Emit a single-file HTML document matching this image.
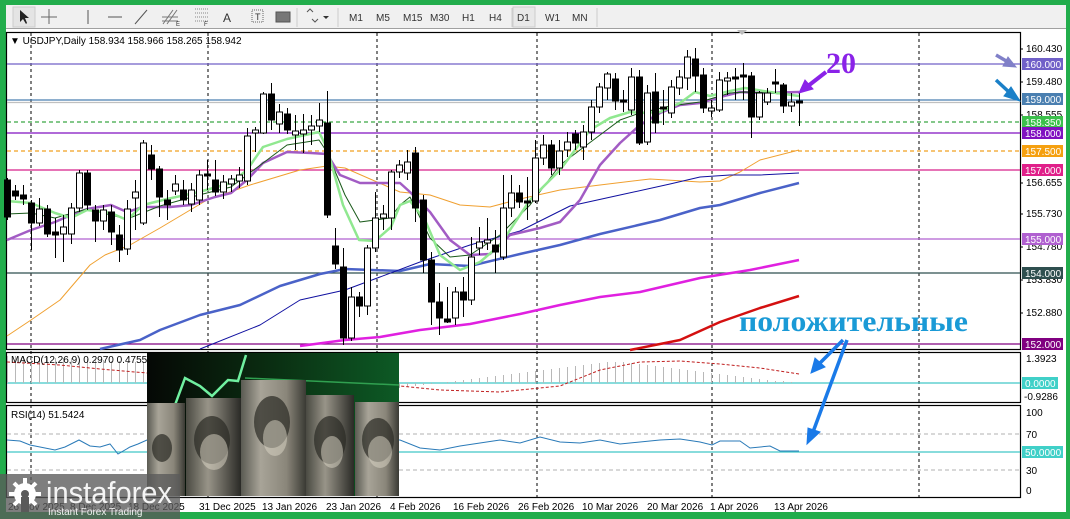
<!DOCTYPE html>
<html><head><meta charset="utf-8"><style>
html,body{margin:0;padding:0;width:1070px;height:519px;overflow:hidden;background:#fff;font-family:"Liberation Sans",sans-serif}
svg text{font-family:"Liberation Sans",sans-serif}
</style></head><body>
<svg id="s" width="1070" height="519" viewBox="0 0 1070 519" xmlns="http://www.w3.org/2000/svg">
<rect width="1070" height="519" fill="#fff"/>
<rect x="0" y="0" width="1070" height="5" fill="#22ad4c"/>
<rect x="0" y="0" width="6" height="519" fill="#22ad4c"/>
<rect x="1066" y="0" width="4" height="519" fill="#22ad4c"/>
<rect x="0" y="512" width="1070" height="7" fill="#22ad4c"/>
<rect x="6" y="5" width="1060" height="24" fill="#f0f0f0"/>
<rect x="6" y="28" width="1060" height="1" fill="#a0a0a0"/>
<g fill="none" stroke="#555" stroke-width="1">
<rect x="13" y="7" width="22" height="20" fill="#e4e4e4" stroke="#ccc"/>
<path d="M20 10 L20 22 L23 19 L26 24 L27 23 L25 18 L29 18 Z" fill="#222" stroke="none"/>
<path d="M49 9 V24 M41 17 H57" stroke="#666"/>
<path d="M88 10 V24"/><path d="M108 17 H122"/><path d="M135 24 L147 10"/>
<path d="M163 24 L173 10 M167 24 L177 10 M162 17 H178 M162 21 H178" stroke="#777"/>
<path d="M195 9 H208 M195 13 H208 M195 17 H208 M195 21 H208" stroke="#888" stroke-dasharray="1 1"/>
<rect x="252" y="10" width="11" height="12" stroke="#666" stroke-dasharray="1 1"/>
<rect x="276" y="12" width="14" height="10" fill="#777" stroke="#555"/>
<path d="M297 8 V27 M338 8 V27 M512 8 V27 M597 8 V27" stroke="#ccc"/>
</g>
<text x="223" y="22" font-size="12" fill="#333">A</text>
<text x="255" y="20" font-size="9" fill="#333">T</text>
<text x="204" y="26" font-size="6" fill="#333">F</text>
<text x="176" y="26" font-size="6" fill="#333">E</text>
<path d="M307 12 l3 -3 l3 3 M312 19 l3 3 l3 -3" stroke="#555" fill="none"/>
<path d="M323 16 l3 3 l3 -3z" fill="#333"/>
<g font-size="10" fill="#333">
<text x="349" y="21">M1</text><text x="376" y="21">M5</text><text x="403" y="21">M15</text><text x="430" y="21">M30</text><text x="462" y="21">H1</text><text x="489" y="21">H4</text>
<rect x="513" y="7" width="22" height="20" fill="#e8e8e8" stroke="#ccc"/>
<text x="517" y="21">D1</text><text x="545" y="21">W1</text><text x="572" y="21">MN</text>
</g>
<g fill="none" stroke="#000" stroke-width="1.2">
<rect x="6.5" y="32.5" width="1014" height="317"/>
<rect x="6.5" y="352.5" width="1014" height="50"/>
<rect x="6.5" y="405.5" width="1014" height="92"/>
</g>
<g stroke="#000" stroke-dasharray="3 3" stroke-width="1">
<path d="M31 33 V497 M208 33 V497 M377 33 V497 M537 33 V497 M712 33 V497 M919 33 V497"/>
</g>
<g stroke-width="1.2">
<path d="M7 64 H1020" stroke="#7060c8"/>
<path d="M7 100 H1020" stroke="#4a7fb0"/>
<path d="M7 102.5 H1020" stroke="#c0c0c0"/>
<path d="M7 122 H1020" stroke="#3aa845" stroke-dasharray="4 3"/>
<path d="M7 133 H1020" stroke="#8010c0"/>
<path d="M7 151 H1020" stroke="#f0a020" stroke-dasharray="4 3"/>
<path d="M7 170 H1020" stroke="#d8208a"/>
<path d="M7 239 H1020" stroke="#b060d0"/>
<path d="M7 273 H1020" stroke="#2f4f4f"/>
<path d="M7 344 H1020" stroke="#800080"/>
</g>
<g fill="none" stroke-linejoin="round">
<polyline stroke="#f0a030" stroke-width="1" points="7,336 31,320 60,300 90,265 105,255 130,245 160,228 207,200 250,185 300,170 327,166 345,168 400,192 430,195 460,205 490,207 520,199 560,190 600,185 650,179 700,182 720,181 740,172 760,160 799,150"/>
<polyline stroke="#4a62c8" stroke-width="2.5" points="100,349 140,340 160,330 200,315 240,305 280,286 320,274 345,269 400,271 430,264 470,266 520,254 560,245 600,234 660,220 700,208 720,205 760,193 799,183"/>
<polyline stroke="#1010a0" stroke-width="1" points="200,349 260,325 300,300 345,290 380,277 420,262 470,245 520,231 570,206 620,195 670,184 700,177 730,175 760,175 799,173"/>
<polyline stroke="#e020e0" stroke-width="2.5" points="300,346 345,340 380,337 420,330 470,324 520,314 560,305 600,297 640,292 700,278 750,270 799,260"/>
<polyline stroke="#d41010" stroke-width="2.5" points="630,350 680,340 720,322 760,308 799,296"/>
<polyline stroke="#a25cc4" stroke-width="2.5" points="7,240 31,230 55,222 71,215 87,209 111,205 127,212 143,207 170,207 191,205 215,197 231,193 247,180 263,163 287,152 311,153 327,154 340,175 360,183 400,183 410,192 430,212 450,240 470,255 490,254 510,235 540,228 560,222 580,200 600,165 620,143 640,125 660,113 680,105 700,103 720,97 740,92 760,93 799,92"/>
<polyline stroke="#1a5a1a" stroke-width="1" points="7,214 31,213 55,218 87,209 127,219 160,206 199,195 231,187 263,163 287,145 319,140 327,152 345,195 360,222 390,218 400,205 410,197 430,238 450,257 470,255 500,235 530,205 560,165 600,135 620,120 640,113 670,106 700,102 730,93 745,92 770,93 799,96"/>
<polyline stroke="#90e890" stroke-width="2.5" points="7,201 31,203 55,213 71,218 87,210 111,213 127,220 143,205 167,199 199,192 231,183 247,170 263,147 287,139 319,132 327,148 343,205 359,240 375,241 391,227 400,205 410,201 425,220 440,255 460,270 480,262 500,245 530,200 560,170 590,130 610,118 630,112 640,113 660,112 680,103 695,92 710,96 730,91 745,88 770,92 799,96"/>
</g>
<g id="candles" stroke="#000" stroke-width="1"></g>
<path d="M7 383 H1020" stroke="#40c8c8" stroke-width="1.2"/>
<g id="macd" stroke="#b8b8b8" stroke-width="1"></g>
<polyline fill="none" stroke="#c02020" stroke-dasharray="3 2" points="7,362 60,365 100,369 147,373 400,386 440,390 500,392 560,386 600,370 640,362 680,361 720,364 760,368 799,374"/>
<text x="11" y="363" font-size="10" fill="#000">MACD(12,26,9) 0.2970 0.4755</text>
<path d="M7 434 H1020 M7 470 H1020" stroke="#b0b0b0" stroke-dasharray="4 3"/>
<path d="M7 452 H1020" stroke="#40c8c8" stroke-width="1.2"/>
<polyline fill="none" stroke="#2a7ab8" stroke-width="1" points="7,440 20,441 30,445 40,447 55,450 65,447 79,440 90,446 100,447 110,444 118,454 130,447 138,444 147,440 400,440 420,448 440,450 460,446 480,443 500,440 520,443 540,437 560,442 580,443 600,440 620,444 640,442 660,440 680,439 700,442 712,445 720,441 740,441 750,448 770,446 780,451 799,451"/>
<text x="11" y="418" font-size="10" fill="#000">RSI(14) 51.5424</text>
<g font-size="10" fill="#000">
<text x="1026" y="52">160.430</text><text x="1026" y="85">159.480</text><text x="1026" y="118">158.555</text>
<text x="1026" y="186">156.655</text><text x="1026" y="217">155.730</text><text x="1026" y="250">154.780</text>
<text x="1026" y="283">153.830</text><text x="1026" y="316">152.880</text>
<text x="1026" y="362">1.3923</text><text x="1024" y="400">-0.9286</text>
<text x="1026" y="416">100</text><text x="1026" y="438">70</text><text x="1026" y="474">30</text><text x="1026" y="494">0</text>
</g>
<g stroke="#000"><path d="M1020 49 h3 M1020 82 h3 M1020 115 h3 M1020 183 h3 M1020 214 h3 M1020 247 h3 M1020 280 h3 M1020 313 h3"/></g>
<g font-size="10" fill="#fff">
<rect x="1022" y="58" width="41" height="12" fill="#7060c8"/><text x="1025" y="68">160.000</text>
<rect x="1022" y="93" width="41" height="12" fill="#4a7fb0"/><text x="1025" y="103">159.000</text>
<rect x="1022" y="116" width="41" height="12" fill="#3cc04c"/><text x="1025" y="126">158.350</text>
<rect x="1022" y="127" width="41" height="12" fill="#8010c0"/><text x="1025" y="137">158.000</text>
<rect x="1022" y="145" width="41" height="12" fill="#f5a010"/><text x="1025" y="155">157.500</text>
<rect x="1022" y="164" width="41" height="12" fill="#e0208a"/><text x="1025" y="174">157.000</text>
<rect x="1022" y="233" width="41" height="12" fill="#b060d0"/><text x="1025" y="243">155.000</text>
<rect x="1022" y="267" width="41" height="12" fill="#2f4f4f"/><text x="1025" y="277">154.000</text>
<rect x="1022" y="338" width="41" height="12" fill="#800080"/><text x="1025" y="348">152.000</text>
<rect x="1022" y="377" width="36" height="12" fill="#40d0c8"/><text x="1025" y="387">0.0000</text>
<rect x="1022" y="446" width="41" height="12" fill="#40d0c8"/><text x="1025" y="456">50.0000</text>
</g>
<g font-size="10" fill="#000">
<text x="8" y="510">26 Nov 2025</text><text x="70" y="510">8 Dec 2025</text><text x="128" y="510">18 Dec 2025</text>
<text x="199" y="510">31 Dec 2025</text><text x="262" y="510">13 Jan 2026</text><text x="326" y="510">23 Jan 2026</text>
<text x="390" y="510">4 Feb 2026</text><text x="453" y="510">16 Feb 2026</text><text x="518" y="510">26 Feb 2026</text>
<text x="582" y="510">10 Mar 2026</text><text x="647" y="510">20 Mar 2026</text><text x="710" y="510">1 Apr 2026</text><text x="774" y="510">13 Apr 2026</text>
</g>
<text x="10" y="44" font-size="10" fill="#000">▼ USDJPY,Daily  158.934 158.966 158.265 158.942</text>
<defs>
<linearGradient id="bg" x1="0" x2="1"><stop offset="0" stop-color="#050805"/><stop offset="0.45" stop-color="#0a2a10"/><stop offset="1" stop-color="#0d5a25"/></linearGradient>
<linearGradient id="roll" x1="0" x2="1"><stop offset="0" stop-color="#5a5a52"/><stop offset="0.3" stop-color="#a8a498"/><stop offset="0.7" stop-color="#8a867a"/><stop offset="1" stop-color="#3a3a34"/></linearGradient>
<linearGradient id="roll2" x1="0" x2="1"><stop offset="0" stop-color="#4a4a42"/><stop offset="0.4" stop-color="#989488"/><stop offset="1" stop-color="#2a2a26"/></linearGradient>
</defs>
<rect x="147" y="353" width="252" height="143" fill="url(#bg)"/>
<polyline points="175,405 185,378 200,386 212,396 228,380 238,381 246,355" fill="none" stroke="#70f0a0" stroke-width="2.5"/>
<path d="M245 378 L399 385" stroke="#30a050" stroke-width="1.5"/>
<rect x="147" y="403" width="38" height="93" fill="url(#roll)"/>
<rect x="186" y="398" width="55" height="98" fill="url(#roll2)"/>
<rect x="241" y="380" width="65" height="116" fill="url(#roll)"/>
<rect x="306" y="395" width="48" height="101" fill="url(#roll2)"/>
<rect x="355" y="402" width="44" height="94" fill="url(#roll)"/>
<g fill="#2a2a24" opacity="0.7">
<ellipse cx="162" cy="448" rx="10" ry="14"/><ellipse cx="212" cy="440" rx="18" ry="24"/><ellipse cx="272" cy="422" rx="18" ry="26"/><ellipse cx="330" cy="440" rx="16" ry="24"/><ellipse cx="378" cy="440" rx="16" ry="22"/>
</g>
<g fill="#ddd8c8" opacity="0.5">
<ellipse cx="214" cy="452" rx="14" ry="18"/><ellipse cx="275" cy="438" rx="12" ry="18"/><ellipse cx="332" cy="452" rx="11" ry="16"/><ellipse cx="380" cy="452" rx="12" ry="16"/>
</g>
<rect x="0" y="474" width="180" height="45" fill="#5a5a5a" opacity="0.78"/>
<g fill="#fff">
<circle cx="25" cy="494" r="11"/>
<g stroke="#fff" stroke-width="4"><path d="M25 478 V510 M9 494 H41 M14 483 L36 505 M36 483 L14 505"/></g>
<circle cx="25" cy="494" r="4" fill="#5a5a5a"/>
<path d="M21 497 H29 V512 H21 Z" fill="#5a5a5a"/>
</g>
<text x="46" y="503" font-size="31" fill="#fff" opacity="0.92" textLength="126" lengthAdjust="spacingAndGlyphs">instaforex</text>
<text x="48" y="515" font-size="10" fill="#fff" opacity="0.9">Instant Forex Trading</text>
<text x="826" y="73" font-weight="bold" font-size="30" fill="#8a22e8" style="font-family:'Liberation Serif',serif">20</text>
<g stroke="#8a22e8" stroke-width="4" fill="#8a22e8"><path d="M826 72 L808 86"/><path d="M799 93 L805 80 L813 89 Z" stroke-width="1"/></g>
<g stroke="#8080c8" stroke-width="3.5" fill="#8080c8"><path d="M996 55 L1008 62"/><path d="M1016 67 L1003 66 L1008 57 Z" stroke-width="1"/></g>
<g stroke="#1a80c8" stroke-width="3.5" fill="#1a80c8"><path d="M996 80 L1010 93"/><path d="M1020 101 L1004 96 L1011 87 Z" stroke-width="1"/></g>
<text x="739" y="331" font-weight="bold" font-size="30" fill="#1a9ad6" textLength="229" lengthAdjust="spacingAndGlyphs" style="font-family:'Liberation Serif',serif">положительные</text>
<g stroke="#1a7ae8" stroke-width="3.5" fill="#1a7ae8">
<path d="M843 340 L818 365"/><path d="M811 373 L815 358 L825 367 Z" stroke-width="1"/>
<path d="M847 340 L813 432"/><path d="M807 444 L808 428 L820 432 Z" stroke-width="1"/>
</g>
<path d="M737 30 l5 5 l5 -5z" fill="#bbb"/>
</svg>
<script>
var C=[
[7,180,217,178,220,0],[15,191,196,185,200,0],[23,195,199,185,205,0],[31,203,223,200,250,0],[39,209,223,198,226,1],[47,209,234,205,237,0],[55,232,235,218,258,0],[63,227,234,215,262,1],[71,208,234,203,244,1],[79,173,208,170,212,1],[87,173,205,170,210,0],[95,210,221,205,242,0],[103,210,221,205,230,1],[111,212,232,205,245,0],[119,235,250,225,262,0],[127,209,249,200,255,1],[135,192,198,180,230,1],[143,143,223,140,225,1],[151,155,169,145,180,0],[159,169,197,166,217,0],[167,200,205,190,220,0],[175,184,191,175,195,1],[183,190,200,180,205,0],[191,190,204,183,212,1],[199,175,200,170,205,1],[207,174,176,160,190,0],[215,180,192,160,196,0],[223,182,192,175,199,1],[231,179,184,175,192,1],[239,175,181,167,188,1],[247,136,181,128,185,1],[255,130,133,127,152,1],[263,94,133,92,134,1],[271,94,120,83,130,0],[279,112,124,104,133,1],[287,114,130,108,134,0],[295,131,135,115,150,1],[303,130,134,114,153,1],[311,126,130,115,145,1],[319,120,126,103,132,1],[327,123,215,91,218,0],[335,246,264,228,269,0],[343,267,338,248,345,0],[351,297,338,287,341,1],[359,297,306,292,317,0],[367,248,306,245,315,1],[375,218,248,192,252,1],[383,214,218,205,230,1],[391,172,218,170,230,1],[399,165,172,160,178,1],
[407,162,173,150,180,1],[415,153,208,147,222,0],[423,200,260,195,273,0],[431,260,302,252,325,0],[439,302,318,283,335,0],[447,319,322,287,323,0],[455,292,318,287,325,1],[463,292,300,277,317,0],[471,257,300,237,305,1],[479,242,248,227,255,1],[487,240,243,218,250,1],[495,245,252,230,273,0],[503,208,257,175,260,1],[511,193,208,175,217,1],[519,193,202,185,208,0],[527,201,202,177,220,0],[535,158,201,140,203,1],[543,145,158,135,165,1],[551,145,168,140,175,0],[559,151,168,140,175,1],[567,142,150,132,157,1],[575,134,143,130,150,0],[583,132,147,125,160,1],[591,107,132,100,140,1],[599,87,107,83,113,1],[607,74,88,72,100,1],[615,79,101,73,110,0],[623,100,101,90,112,0],[631,77,110,68,115,1],[639,77,143,70,145,0],[647,93,142,85,145,1],[655,92,123,73,133,0],[663,107,109,90,125,0],[671,87,113,80,118,1],[679,77,88,70,95,1],[687,57,78,50,90,1],[695,59,76,48,92,0],[703,75,108,68,113,0],[711,108,111,100,117,1],[719,80,110,72,112,1],[727,78,81,72,95,1],[735,77,78,68,100,0],[743,75,76,63,100,0],[751,76,117,72,138,0],[759,93,117,91,120,1],[767,93,102,88,105,1],[775,82,84,69,93,0],[783,85,106,83,113,0],[791,102,106,93,112,1],[799,101,102,93,126,0]];
var g=document.getElementById('candles'),h='';
C.forEach(function(c){var x=c[0]+0.5;h+='<path d="M'+x+' '+c[3]+' V'+c[4]+'"/>';var t=Math.min(c[1],c[2]),b=Math.max(c[1],c[2]);if(b-t<2)b=t+2;h+='<rect x="'+(c[0]-2.5)+'" y="'+t+'" width="6" height="'+(b-t)+'" fill="'+(c[5]?'#fff':'#000')+'"/>';});
g.innerHTML=h;
var m=document.getElementById('macd'),hm='';
var mv=[356,356,356,357,357,357,358,358,358,359,359,360,360,361,361,362,362,363,364,365,366,367,368,369,370,371,372,373,374,375,376,377,378,379,380,381,382,382,383,383,384,385,386,387,388,388,389,389,389,388,387,386,385,384,383,382,381,380,379,378,377,376,375,374,373,372,371,370,369,368,367,366,365,364,363,362,362,362,363,364,365,366,367,368,369,370,371,372,373,374,375,376,377,378,379,380,381,381,382];
for(var i=0;i<mv.length;i++){var x=7+i*8+0.5;var y=mv[i];if(y<383)hm+='<path d="M'+x+' '+y+' V383"/>';else if(y>383)hm+='<path d="M'+x+' 383 V'+y+'"/>';}
m.innerHTML=hm;
</script>
</body></html>
